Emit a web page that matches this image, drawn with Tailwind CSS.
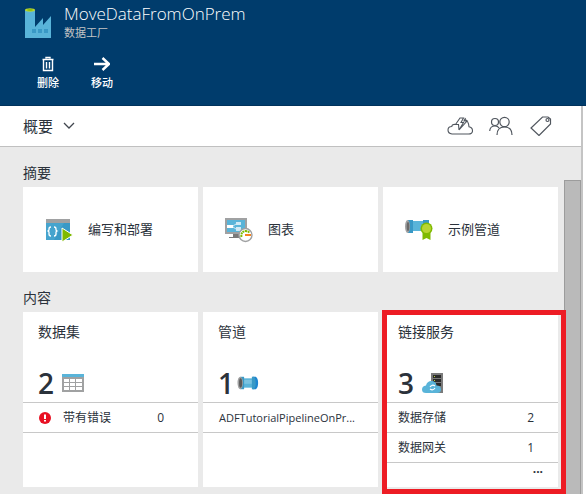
<!DOCTYPE html>
<html lang="zh-CN">
<head>
<meta charset="utf-8">
<meta name="viewport" content="width=device-width, initial-scale=1">
<title>MoveDataFromOnPrem</title>
<script src="https://cdn.jsdelivr.net/npm/@tailwindcss/browser@4"></script>
</head>
<body class="bg-white font-['Open_Sans','Noto_Sans_CJK_SC',sans-serif] text-[#2b323b]">
<svg class="hidden" aria-hidden="true">
  <symbol id="pipe" viewBox="0 0 28 18">
    <rect x="4" y="3" width="20" height="12" fill="#59b4d9"/>
    <rect x="8" y="5" width="12" height="5" fill="#7ac3e1"/>
    <path d="M4 1h5v16H4z" fill="#3999c6"/>
    <path d="M20 1h4q3 2 3 8t-3 8h-4q2-3 2-8t-2-8z" fill="#1e86d0"/>
    <path d="M19 1h3q2 3 2 8t-2 8h-3z" fill="#3999c6"/>
    <ellipse cx="4" cy="9" rx="3.5" ry="8" fill="#a0a1a2"/>
    <ellipse cx="4.5" cy="9" rx="2" ry="6" fill="#5a5a5a"/>
  </symbol>
</svg>
<div class="flex h-screen flex-col overflow-hidden">
  <header class="h-[106px] shrink-0 border-b border-[#00325c] bg-[#003c6c] text-white">
    <div class="flex items-start gap-3 pt-1 pl-6">
      <svg class="mt-1 h-[31px] w-7" viewBox="0 0 28 31" aria-hidden="true">
        <path d="M1 2h10v17l8-9v7l8-9v22H1z" fill="#59b4d9"/>
        <ellipse cx="6" cy="2" rx="5" ry="1.7" fill="#b8d432"/><ellipse cx="6" cy="2" rx="3" ry=".8" fill="#7fba00"/>
        <path d="M8 21h4v4H8zM14 21h4v4h-4zM20 21h4v4h-4z" fill="#3999c6"/>
      </svg>
      <div>
        <h1 class="text-[17px] leading-5 font-light">MoveDataFromOnPrem</h1>
        <p class="mt-px text-[11px] leading-4 text-[#c5c5c5]">数据工厂</p>
      </div>
    </div>
    <div class="mt-[15px] flex gap-8 pl-[37px]">
      <button class="flex flex-col items-center gap-[3px] text-[11px] leading-4 font-medium">
        <svg class="h-4 w-4" viewBox="0 0 16 16" fill="none" stroke="#fff" aria-hidden="true"><path d="M6 2.500V1.500h4v1M2.500 3.500h11M3.500 4v10.500h9V4M6.500 6v6.500M9.500 6v6.500" stroke-width="1.400"/></svg>
        删除
      </button>
      <button class="flex flex-col items-center gap-[3px] text-[11px] leading-4 font-medium">
        <svg class="h-4 w-4" viewBox="0 0 16 16" fill="none" stroke="#fff" stroke-width="2.400" aria-hidden="true"><path d="M0 8h14.500M8.500 2L15 8l-6.500 6"/></svg>
        移动
      </button>
    </div>
  </header>
  <div class="mr-[3px] flex min-h-0 grow flex-col border-r-2 border-[#c4c4c4]">
    <div class="flex h-[41px] shrink-0 items-center justify-between border-b border-[#c0c0c0] pr-7 pl-[23px]">
      <button class="flex items-center gap-[10px] text-[15px] leading-5">概要
        <svg class="h-3 w-3" viewBox="0 0 12 12" fill="none" stroke="#40464e" stroke-width="1.300" aria-hidden="true"><path d="M1 3l5 5 5-5"/></svg>
      </button>
      <div class="flex items-center gap-4">
        <button aria-label="状态"><svg class="block h-5 w-[26px]" viewBox="0 0 26 20" fill="none" stroke="#50565e" stroke-width="1.100"><path d="M8.500 8.500Q5 8 4.800 10.500 1 10.500 1 14t4 4h16.500q4 0 4-3.300t-3.500-4Q21.500 5 18 3.500M8.500 8.500L13 2h3.500L14 6.500h2.500L12 14l8-9h-3l1.500-3M8.500 8.500h3L12 14"/></svg></button>
        <button aria-label="用户"><svg class="block h-5 w-6" viewBox="0 0 24 20" fill="none" stroke="#50565e" stroke-width="1.200"><circle cx="15.500" cy="6" r="4.700"/><circle cx="6" cy="6" r="3.500"/><path d="M8 19q0-8 7.500-8t7.500 8M.7 15Q1 10 6 10q3 0 4 2"/></svg></button>
        <button aria-label="标记"><svg class="block h-5 w-6" viewBox="0 0 24 20" fill="none" stroke="#50565e" stroke-width="1.200"><path d="M13.500 1H19l2.500 2V8L10 19.500 2 12z"/><circle cx="18.500" cy="4" r="1.500"/></svg></button>
      </div>
    </div>
    <div class="flex min-h-0 grow bg-[#eaeaea]">
      <main class="flex min-w-0 grow flex-col pt-4 pr-[6px] pl-[23px]">
        <h2 class="text-sm leading-5">摘要</h2>
        <div class="mt-1 grid grid-cols-3 gap-[5px]">
          <button class="flex h-[85px] items-center gap-[15px] bg-white pl-[22px] text-[13px]">
            <svg class="h-7 w-7" viewBox="0 0 28 28" aria-hidden="true"><path d="M1 3h24v21H1z" fill="#3999c6"/><path d="M1 3h24v4H1z" fill="#a0a1a2"/><path d="M1 7h18L9 24H1z" fill="#59b4d9" opacity=".4"/><path d="M6 11q-2 0-2 2v1l-1 1 1 1v2q0 2 2 2M9 11q2 0 2 2v1l1 1-1 1v2q0 2-2 2" fill="none" stroke="#fff" stroke-width="1.300"/><path d="M17 12l11 7-11 7z" fill="#7fba00" stroke="#fff"/></svg>
            编写和部署
          </button>
          <button class="flex h-[85px] items-center gap-[15px] bg-white pl-[22px] text-[13px]">
            <svg class="h-7 w-7" viewBox="0 0 28 28" aria-hidden="true"><path d="M0 2h22v16H0z" fill="#a0a1a2"/><path d="M2 4h18v12H2z" fill="#59b4d9"/><path d="M8 18h6v3h3v1H4v-1h4z" fill="#7a7a7a"/><path d="M2 9h6v3H2z" fill="#fff"/><path d="M11 6h5v3h-5zM11 11h5v4h-5z" fill="#cfe9f5"/><path d="M8 10l3-2M8 11l3 2" stroke="#cfe9f5"/><circle cx="20.500" cy="19" r="6.500" fill="#fff" stroke="#a0a1a2" stroke-width="1.400"/><path d="M16.500 21q-1-5 4-6 3 0 4 2" fill="none" stroke="#7fba00" stroke-width="2" stroke-dasharray="2 .5"/><path d="M20 18h6v2h-6z" fill="#f58220"/></svg>
            图表
          </button>
          <button class="flex h-[85px] items-center gap-[15px] bg-white pl-[22px] text-[13px]">
            <svg class="h-7 w-7" viewBox="0 0 28 28" aria-hidden="true"><path d="M3 5h18v10H3z" fill="#59b4d9"/><path d="M3 4h5v13H3z" fill="#3999c6"/><path d="M18 4h6v12h-6z" fill="#3999c6"/><ellipse cx="2.500" cy="10.500" rx="2.500" ry="6.500" fill="#a0a1a2"/><ellipse cx="3" cy="10.500" rx="1.300" ry="4.500" fill="#6a6a6a"/><path d="M17.500 17h8v7l-4-2-4 2z" fill="#7fba00"/><circle cx="21.500" cy="12.500" r="6" fill="#7fba00"/><circle cx="21.500" cy="12.500" r="4.500" fill="#b8d432"/></svg>
            示例管道
          </button>
        </div>
        <h2 class="mt-4 text-sm leading-5">内容</h2>
        <div class="mt-1 grid grid-cols-3 gap-[5px]">
          <section class="flex h-[175px] flex-col bg-white">
            <h3 class="px-[15px] pt-[10px] text-sm leading-5">数据集</h3>
            <div class="mt-[21px] flex h-[39px] items-center gap-2 px-[15px]"><span class="text-[28px] leading-10 font-semibold">2</span><svg class="h-5 w-[22px]" viewBox="0 0 22 20" aria-hidden="true"><path d="M0 1h22v18H0z" fill="#a0a1a2"/><path d="M0 1h22v3H0z" fill="#59b4d9"/><path d="M2 6h5v3H2zM8 6h5v3H8zM14 6h6v3h-6zM2 10h5v3H2zM8 10h5v3H8zM14 10h6v3h-6zM2 14h5v3H2zM8 14h5v3H8zM14 14h6v3h-6z" fill="#fff"/></svg></div>
            <div class="flex h-[31px] items-center border-y border-[#c8c8c8] pt-px pr-[34px] pl-4 text-xs"><svg class="mr-3 h-3 w-3" viewBox="0 0 12 12" aria-hidden="true"><circle cx="6" cy="6" r="6" fill="#e81123"/><path d="M5 2.500h2v4.500H5zM5 8h2v1.500H5z" fill="#fff"/></svg><span>带有错误</span><span class="ml-auto">0</span></div>
          </section>
          <section class="flex h-[175px] flex-col bg-white">
            <h3 class="px-[15px] pt-[10px] text-sm leading-5">管道</h3>
            <div class="mt-[21px] flex h-[39px] items-center gap-[3px] px-[15px]"><span class="text-[28px] leading-10 font-semibold">1</span><svg class="h-[14px] w-[22px]" aria-hidden="true"><use href="#pipe"/></svg></div>
            <div class="flex h-[31px] items-center border-y border-[#c8c8c8] pt-px pl-4 text-[11px]"><a href="#" class="whitespace-nowrap">ADFTutorialPipelineOnPr...</a></div>
          </section>
          <section class="relative flex h-[175px] flex-col bg-white">
            <div class="pointer-events-none absolute -top-[2px] -right-[8px] -bottom-[7px] -left-[1px] border-5 border-[#ed1c24]"></div>
            <h3 class="px-[15px] pt-[10px] text-sm leading-5">链接服务</h3>
            <div class="mt-[21px] flex h-[39px] items-center gap-2 px-[15px]"><span class="text-[28px] leading-10 font-semibold">3</span><svg class="h-[22px] w-[22px]" viewBox="0 0 22 22" aria-hidden="true"><path d="M9 1h12v20H9z" fill="#7a7a7a"/><path d="M11 3h8v3h-8zM11 7h8v3h-8zM11 11h8v3h-8z" fill="#2b2b2b"/><path d="M12 4h1v1h-1zM12 8h1v1h-1z" fill="#b8d432"/><path d="M4 21q-4 0-4-3.500t4-4q1-4.500 5.500-4.500t5 4.500q4.500 0 4.500 4 0 3.500-4 3.500z" fill="#59b4d9"/><path d="M8 15q2-3 5-1M13 16q-2 3-5 1" fill="none" stroke="#fff" stroke-width="1.200"/></svg></div>
            <div class="flex h-[31px] items-center justify-between border-y border-[#c8c8c8] pt-px pr-6 pl-[15px] text-xs"><span>数据存储</span><span>2</span></div>
            <div class="flex h-[30px] items-center justify-between border-b border-[#c8c8c8] pt-px pr-6 pl-[15px] text-xs"><span>数据网关</span><span>1</span></div>
            <button aria-label="更多" class="mt-px mr-[15px] self-end text-xs leading-4 font-bold">···</button>
          </section>
        </div>
      </main>
      <div class="mt-[33px] w-[17px] shrink-0 border border-b-0 border-[#9c9c9c] bg-[#bababa]"></div>
    </div>
  </div>
</div>
</body>
</html>
